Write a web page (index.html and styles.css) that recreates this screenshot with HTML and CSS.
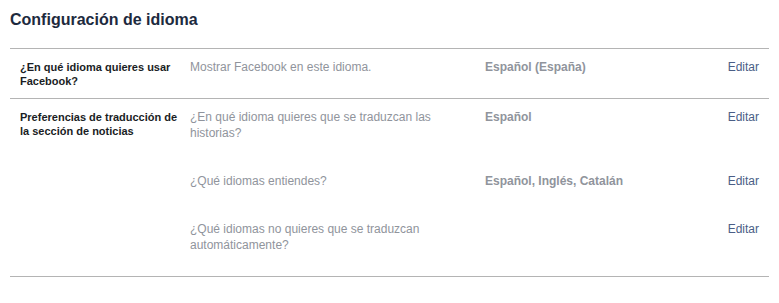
FILE: index.html
```html
<!DOCTYPE html>
<html lang="es">
<head>
<meta charset="utf-8">
<title>Configuración de idioma</title>
<link rel="stylesheet" href="styles.css">
</head>
<body>
<div class="page">
  <h2 class="title">Configuración de idioma</h2>
  <div class="settings">
    <div class="row">
      <div class="label">¿En qué idioma quieres usar Facebook?</div>
      <div class="items">
        <div class="item">
          <div class="desc">Mostrar Facebook en este idioma.</div>
          <div class="value">Español (España)</div>
          <a class="edit" href="#">Editar</a>
        </div>
      </div>
    </div>
    <div class="row row-multi">
      <div class="label">Preferencias de traducción de la sección de noticias</div>
      <div class="items">
        <div class="item">
          <div class="desc">¿En qué idioma quieres que se traduzcan las historias?</div>
          <div class="value">Español</div>
          <a class="edit" href="#">Editar</a>
        </div>
        <div class="item">
          <div class="desc">¿Qué idiomas entiendes?</div>
          <div class="value">Español, Inglés, Catalán</div>
          <a class="edit" href="#">Editar</a>
        </div>
        <div class="item">
          <div class="desc">¿Qué idiomas no quieres que se traduzcan automáticamente?</div>
          <div class="value"></div>
          <a class="edit" href="#">Editar</a>
        </div>
      </div>
    </div>
  </div>
</div>
</body>
</html>
```
FILE: styles.css
```css
html, body {
  margin: 0;
  padding: 0;
  background: #ffffff;
}

body {
  font-family: "Liberation Sans", Arial, Helvetica, sans-serif;
  font-size: 12px;
  color: #1d2129;
}

.page {
  padding: 10px 10px 0 10px;
}

.title {
  margin: 0 0 18px 0;
  font-size: 16px;
  line-height: 20px;
  font-weight: bold;
  color: #1d2a3e;
}

.settings {
  border-bottom: 1px solid #b4b4b4;
}

.row {
  display: grid;
  grid-template-columns: 170px 1fr;
  border-top: 1px solid #b4b4b4;
  padding: 10px 10px 10px 10px;
}

.row-multi {
  padding-bottom: 23px;
}

.label {
  font-size: 11px;
  font-weight: bold;
  line-height: 14px;
  padding-right: 8px;
  margin-top: 1px;
  color: #1a1d24;
}

.items {
  display: flex;
  flex-direction: column;
  gap: 32px;
}

.item {
  display: grid;
  grid-template-columns: 295px 1fr auto;
  line-height: 16px;
}

.desc {
  color: #90949c;
  padding-right: 20px;
}

.value {
  color: #90949c;
  font-weight: bold;
}

.edit {
  color: #4b5e86;
  text-decoration: none;
}
```
